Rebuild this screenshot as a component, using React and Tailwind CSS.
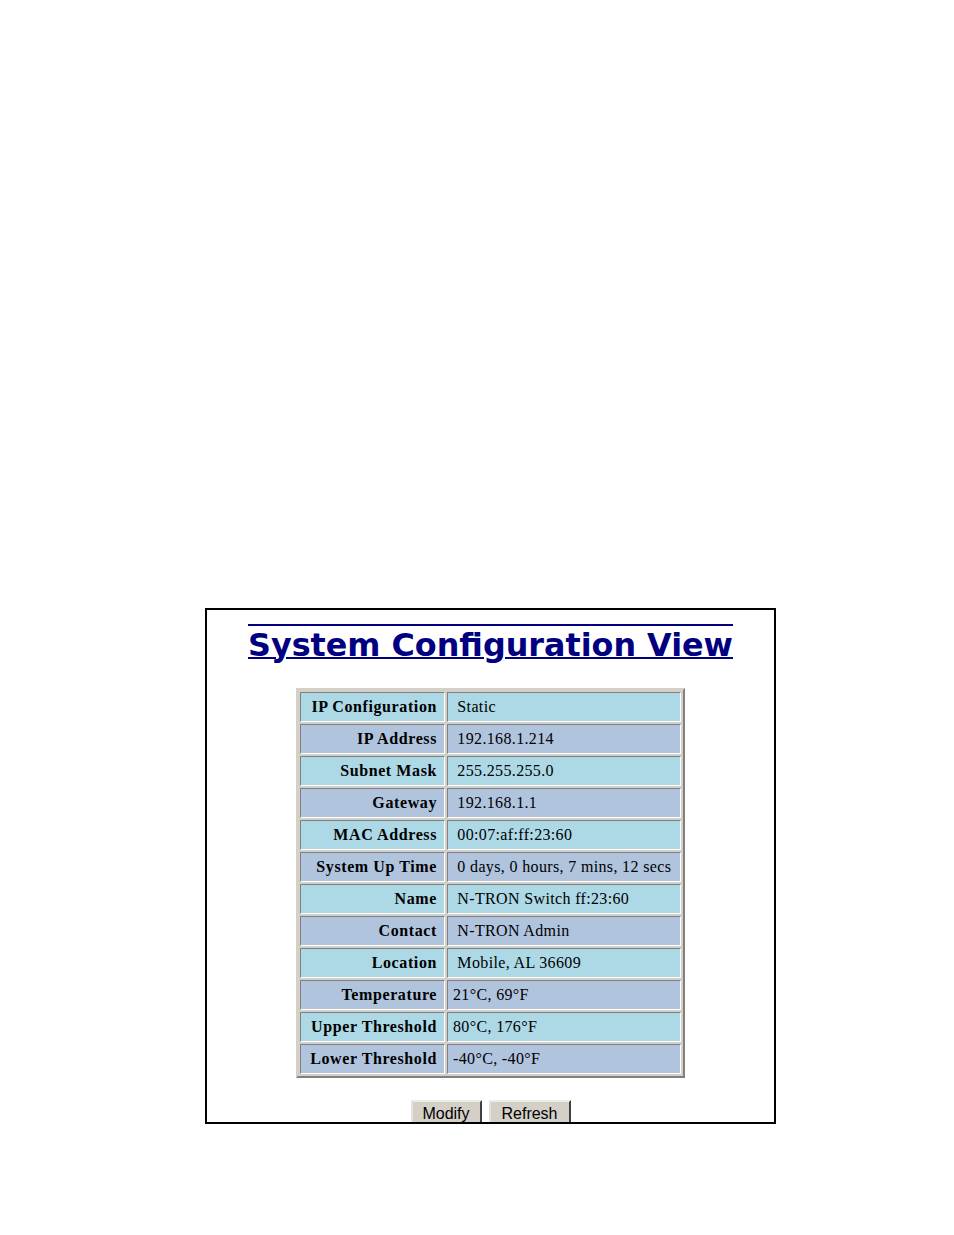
const rows = [
  ["IP Configuration", "\u00a0Static"],
  ["IP Address", "\u00a0192.168.1.214"],
  ["Subnet Mask", "\u00a0255.255.255.0"],
  ["Gateway", "\u00a0192.168.1.1"],
  ["MAC Address", "\u00a000:07:af:ff:23:60"],
  ["System Up Time", "\u00a00 days, 0 hours, 7 mins, 12 secs"],
  ["Name", "\u00a0N-TRON Switch ff:23:60"],
  ["Contact", "\u00a0N-TRON Admin"],
  ["Location", "\u00a0Mobile, AL 36609"],
  ["Temperature", "21°C, 69°F"],
  ["Upper Threshold", "80°C, 176°F"],
  ["Lower Threshold", "-40°C, -40°F"],
];

export default function App() {
  return (
    <div className="w-[954px] h-[1235px] bg-white pt-[608px] pl-[205px]">
      <div className="w-[571px] h-[516px] border-2 border-black overflow-hidden flex flex-col items-center">
        {/* Title */}
        <h1
          className="mt-[16px] text-[31.8px] leading-[37px] font-bold text-[#000080] underline decoration-[1.5px]"
          style={{ fontFamily: '"DejaVu Sans", Verdana, sans-serif', textDecorationLine: "underline overline" }}
        >
          System Configuration View
        </h1>

        {/* Table */}
        <table
          className="mt-[25px] border-separate border-spacing-[2px] border-2 border-t-[#d4d0c8] border-l-[#d4d0c8] border-b-[#808080] border-r-[#808080] bg-[#d4d0c8] text-[16px] text-black"
          style={{ fontFamily: '"Liberation Serif", "Times New Roman", serif' }}
        >
          <tbody>
            {rows.map(([label, value], i) => (
              <tr key={label} className={i % 2 === 0 ? "bg-[#add8e6]" : "bg-[#b0c4de]"}>
                <td className="w-[145px] h-[30px] p-0 pr-[7px] text-right font-bold tracking-[0.6px] border border-t-[#808080] border-l-[#808080] border-b-white border-r-white whitespace-nowrap">
                  {label}
                </td>
                <td className="w-[234px] h-[30px] p-0 pl-[5px] text-left tracking-[0.35px] border border-t-[#808080] border-l-[#808080] border-b-white border-r-white whitespace-nowrap">
                  {value}
                </td>
              </tr>
            ))}
          </tbody>
        </table>

        {/* Buttons */}
        <div className="mt-[22px] flex gap-[7px]" style={{ fontFamily: '"Liberation Sans", Arial, sans-serif' }}>
          <button className="w-[71px] h-[30px] pb-[2px] bg-[#d4d0c8] text-[16px] text-black border-2 border-t-[#eeece8] border-l-[#e4e2dc] border-b-[#404040] border-r-[#404040]">
            Modify
          </button>
          <button className="w-[82px] h-[30px] pb-[2px] bg-[#d4d0c8] text-[16px] text-black border-2 border-t-[#eeece8] border-l-[#e4e2dc] border-b-[#404040] border-r-[#404040]">
            Refresh
          </button>
        </div>
      </div>
    </div>
  );
}
